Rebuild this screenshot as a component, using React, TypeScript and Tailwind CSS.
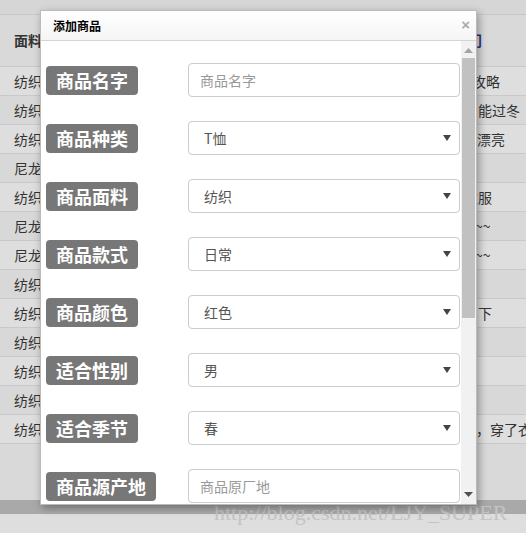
import React from "react";

const rows = [
  { left: "纺织", right: "攻略", shift: "ml-[-1px]" },
  { left: "纺织", right: "能过冬", shift: "ml-[5px]" },
  { left: "纺织", right: "漂亮", shift: "ml-[4px]" },
  { left: "尼龙", right: "", shift: "" },
  { left: "纺织", right: "衣服", shift: "ml-[-9px]" },
  { left: "尼龙", right: "~~", shift: "ml-[2px]" },
  { left: "尼龙", right: "~~", shift: "ml-[2px]" },
  { left: "纺织", right: "", shift: "" },
  { left: "纺织", right: "下", shift: "ml-[5px]" },
  { left: "纺织", right: "", shift: "" },
  { left: "纺织", right: "", shift: "" },
  { left: "纺织", right: "", shift: "" },
  { left: "纺织", right: "，穿了衣", shift: "ml-[3px]" },
];

type Field = { label: string; kind: "input" | "select"; value: string };

const fields: Field[] = [
  { label: "商品名字", kind: "input", value: "商品名字" },
  { label: "商品种类", kind: "select", value: "T恤" },
  { label: "商品面料", kind: "select", value: "纺织" },
  { label: "商品款式", kind: "select", value: "日常" },
  { label: "商品颜色", kind: "select", value: "红色" },
  { label: "适合性别", kind: "select", value: "男" },
  { label: "适合季节", kind: "select", value: "春" },
  { label: "商品源产地", kind: "input", value: "商品原厂地" },
];

const cjk = "font-['Noto_Sans_CJK_SC',sans-serif]";

function FormRow({ field }: { field: Field }) {
  return (
    <div className="grid grid-cols-[142px_272px] items-center h-[34px] pl-[5px]">
      <div>
        <span className="inline-flex items-center h-[29px] px-[10px] rounded-[4px] bg-[#777777] text-white text-[18px] font-bold leading-none">
          {field.label}
        </span>
      </div>
      <div className="flex items-center h-[34px] border border-[#cccccc] rounded-[4px] bg-white text-[14px]">
        {field.kind === "input" ? (
          <span className="pl-[11px] text-[#999999]">{field.value}</span>
        ) : (
          <>
            <span className="pl-[15px] flex-1 text-[#555555]">{field.value}</span>
            <svg width="8" height="6" viewBox="0 0 8 6" className="mr-[8px]">
              <path d="M0 0 H8 L4 6 Z" fill="#444444" />
            </svg>
          </>
        )}
      </div>
    </div>
  );
}

export default function App() {
  return (
    <div className={`relative w-[526px] h-[533px] overflow-hidden bg-[#d6d6d6] ${cjk}`}>
      {/* table behind the backdrop */}
      <div className="h-[15px] border-b border-[#c6c6c6]"></div>
      <div className="h-[52px] bg-[#d9d9d9] border-b border-[#c9c9c9] flex text-[14px]">
        <span className="pl-[14px] pt-[18px] w-[468px] font-bold text-[#333333] leading-none">面料</span>
        <span className="pt-[18px] text-[#33337a] font-bold leading-none">门</span>
      </div>
      {rows.map((r, i) => (
        <div
          key={i}
          className={`h-[29px] flex items-center border-b border-[#c9c9c9] text-[14px] text-[#333333] whitespace-nowrap overflow-hidden ${
            i % 2 === 0 ? "bg-[#dedede]" : "bg-[#d8d8d8]"
          }`}>
          <span className="pl-[14px] w-[473px] shrink-0">{r.left}</span>
          <span className={r.shift}>{r.right}</span>
        </div>
      ))}
      <div className="h-[56px] bg-[#d9d9d9]"></div>
      <div className="h-[14px] bg-[#a9a9a9] flex items-center">
        <span className="ml-[214px] text-[22px] text-[#c4c4c4] font-['Liberation_Serif',serif] leading-none mt-[12px] whitespace-nowrap">
          http://blog.csdn.net/LJY_SUPER
        </span>
      </div>
      <div className="h-[40px] bg-[#dedede]"></div>

      {/* modal */}
      <div className="absolute left-[40px] top-[10px] w-[437px] h-[495px] bg-white border border-[#bbbbbb] shadow-[2px_3px_8px_rgba(0,0,0,0.35)] flex flex-col">
        <div className="h-[30px] flex items-center justify-between px-[12px] bg-gradient-to-b from-white to-[#f5f5f5] border-b border-[#d4d4d4]">
          <span className="text-[12px] font-bold text-black">添加商品</span>
          <span className="text-[15px] font-bold text-[#aaaaaa] font-['Liberation_Sans',sans-serif] leading-none mr-[-6px] mt-[-2px]">×</span>
        </div>
        <div className="flex flex-1 overflow-hidden">
          <div className="flex-1 flex flex-col gap-[24px] pt-[22px]">
            {fields.map(f => (
              <FormRow key={f.label} field={f} />
            ))}
          </div>
          <div className="w-[15px] bg-[#f1f1f1] flex flex-col items-center">
            <svg width="9" height="5" viewBox="0 0 9 5" className="mt-[7px]">
              <path d="M0 5 H9 L4.5 0 Z" fill="#a3a3a3" />
            </svg>
            <div className="mt-[5px] w-[13px] h-[260px] bg-[#c1c1c1]"></div>
            <div className="flex-1"></div>
            <svg width="9" height="5" viewBox="0 0 9 5" className="mb-[7px]">
              <path d="M0 0 H9 L4.5 5 Z" fill="#505050" />
            </svg>
          </div>
        </div>
      </div>
    </div>
  );
}
